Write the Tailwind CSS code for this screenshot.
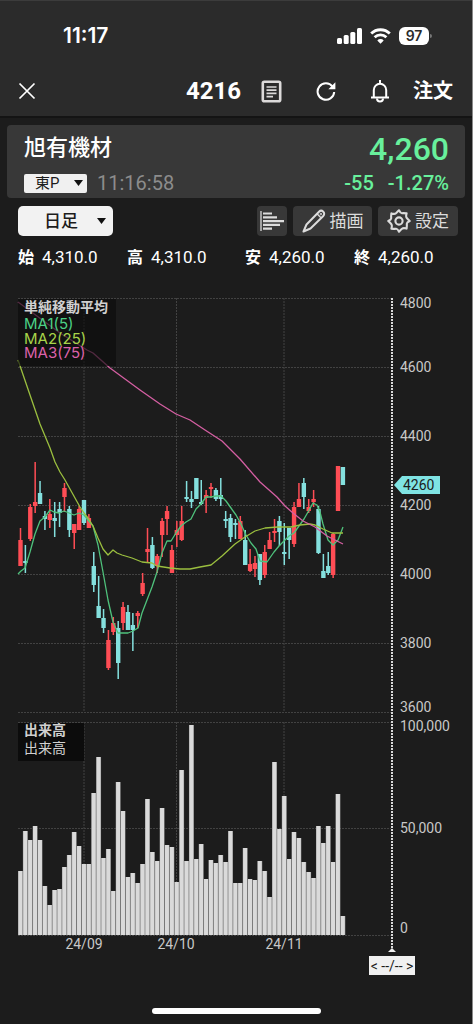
<!DOCTYPE html>
<html lang="ja">
<head>
<meta charset="utf-8">
<meta name="viewport" content="width=device-width, initial-scale=1">
<title>4216 旭有機材</title>
<script src="https://cdn.jsdelivr.net/npm/@tailwindcss/browser@4"></script>
</head>
<body class="bg-[#1c1c1c]">
<div class="flex min-h-screen flex-col border-r border-[#8a8a8a] bg-[#1c1c1c] font-['Roboto','Noto_Sans_CJK_JP',sans-serif] text-white">

  <header class="border-b-2 border-[#141414] bg-[#2b2b2b]">
    <div class="flex h-[70px] items-center justify-between border-t border-[#3c3c3c] pl-[63px] pr-10">
      <span class="font-['Inter',sans-serif] text-[21px] font-semibold">11:17</span>
      <div class="flex items-center gap-2">
        <svg class="h-4 w-[25px]" viewBox="0 0 25 16" fill="#fff" aria-label="signal"><rect x="0" y="10" width="5" height="6" rx="1.5"/><rect x="6.7" y="7" width="5" height="9" rx="1.5"/><rect x="13.3" y="4" width="5" height="12" rx="1.5"/><rect x="20" y="0" width="5" height="16" rx="1.5"/></svg>
        <svg class="h-4 w-[21px]" viewBox="0 0 21 16" fill="none" stroke="#fff" stroke-width="2.8" aria-label="wifi"><path d="M1.2 5.6a13.2 13.2 0 0 1 18.6 0"/><path d="M4.6 9.3a8.4 8.4 0 0 1 11.8 0"/><path d="M10.5 15.8 7.3 12.4a4.5 4.5 0 0 1 6.4 0Z" fill="#fff" stroke="none"/></svg>
        <div class="flex items-center gap-px">
          <span class="flex h-[18px] w-[30px] items-center justify-center rounded-md bg-white font-['Inter',sans-serif] text-sm font-semibold text-[#2b2b2b]">97</span>
          <span class="h-1 w-0.5 rounded-r bg-[#777]"></span>
        </div>
      </div>
    </div>
    <div class="flex h-[46px] items-center pl-[18px] pr-[19px] pb-1">
      <button aria-label="閉じる"><svg class="size-[18px]" viewBox="0 0 18 18" stroke="#fff" stroke-width="1.7"><path d="M1.5 1.5l15 15M16.5 1.5l-15 15"/></svg></button>
      <h1 class="ml-auto text-2xl font-bold">4216</h1>
      <button class="ml-5" aria-label="メモ"><svg class="h-[23px] w-[21px]" viewBox="0 0 21 23" fill="none" stroke="#dcdada" stroke-width="2.6"><rect x="1.8" y="1.8" width="17.4" height="19.4" rx="1.5"/><path d="M5.5 7h10M5.5 10.2h10M5.5 13.4h10M5.5 16.6h6.5" stroke-width="1.7"/></svg></button>
      <button class="ml-[34px]" aria-label="更新"><svg class="size-5" viewBox="0 0 20 20" fill="none" stroke="#fff" stroke-width="2"><path d="M16.6 5.6A8.3 8.3 0 1 0 18.2 11"/><path d="M19.4 1.2v7h-7Z" fill="#fff" stroke="none"/></svg></button>
      <button class="ml-[34px]" aria-label="通知"><svg class="h-[23px] w-5" viewBox="0 0 20 23" fill="none" stroke="#fff" stroke-width="2"><path d="M1 17.5h18M3.8 17.5V10a6.2 6.2 0 0 1 12.4 0v7.5M10 0v4"/><path d="M7 18.5a3 3 0 0 0 6 0"/></svg></button>
      <button class="ml-[23px] text-xl font-bold">注文</button>
    </div>
  </header>

  <section class="mx-[7px] mt-[7px] flex h-[73px] justify-between rounded bg-[#383838] pr-4 pl-[17px]">
    <div>
      <h2 class="mt-[7px] text-[22px] leading-8 font-medium">旭有機材</h2>
      <div class="mt-[7px] flex h-6 items-center gap-2.5">
        <div class="relative flex">
          <select aria-label="市場" class="h-[19px] w-[63px] appearance-none rounded-xs bg-[#f0f0f0] pl-[11px] text-[15px] leading-none text-[#1c1c1c]"><option>東P</option></select>
          <svg class="pointer-events-none absolute top-1.5 right-1 h-[6px] w-[9px]" viewBox="0 0 9 6" fill="#111"><path d="M0 0h9L4.5 6Z"/></svg>
        </div>
        <time class="text-xl text-[#8c8c8c]">11:16:58</time>
      </div>
    </div>
    <div class="text-right font-medium text-[#68f09c]">
      <div class="mt-1.5 text-[32px] leading-9">4,260</div>
      <div class="mt-1 flex h-6 items-center justify-end gap-3.5 text-xl"><span>-55</span><span>-1.27%</span></div>
    </div>
  </section>

  <div class="mt-2 flex h-[30px] gap-1.5 pr-3.5 pl-[18px]">
    <div class="relative mr-auto flex">
      <select aria-label="足種" class="h-[30px] w-[95px] appearance-none rounded-[5px] bg-[#f2f2f2] pl-[26px] text-[17px] leading-none font-medium text-[#1c1c1c]"><option>日足</option></select>
      <svg class="pointer-events-none absolute top-3 right-[7px] h-[6px] w-[9px]" viewBox="0 0 9 6" fill="#111"><path d="M0 0h9L4.5 6Z"/></svg>
    </div>
    <button class="flex w-[30px] items-center justify-center rounded bg-[#383838]" aria-label="価格帯別出来高"><svg class="h-5 w-6" viewBox="0 0 24 20" fill="none" stroke="#dcdcdc" stroke-width="2.2"><path d="M1 0v20" stroke-width="1.3"/><path d="M3 2.5h9M3 6.3h14M3 10.1h21M3 13.9h17M3 17.7h9"/></svg></button>
    <button class="flex w-[79px] items-center justify-center gap-1 rounded bg-[#383838] text-[17px] text-[#dcdcdc]"><svg class="size-6" viewBox="0 0 24 24" fill="none" stroke="#dcdcdc" stroke-width="2" stroke-linejoin="round"><path d="M1.5 22.5 4.5 15.5 17 2.7a3 3 0 0 1 4.3 4.3L8.5 19.5Z"/><path d="m15 4.8 4.2 4.2" stroke-width="1.3"/><circle cx="18.9" cy="5.1" r=".8" stroke-width="1"/></svg><span class="pt-0.5">描画</span></button>
    <button class="flex w-20 items-center justify-center gap-1 rounded bg-[#383838] text-[17px] text-[#dcdcdc]"><svg class="size-6" viewBox="0 0 24 24" fill="none" stroke="#dcdcdc" stroke-width="2.1" stroke-linejoin="round"><path d="M12 1.3Q13.5 4.4 15 4.2T19.6 4.4Q18.6 7.6 19.8 9T22.7 12Q19.6 13.5 19.8 15T19.6 19.6Q16.4 18.6 15 19.8T12 22.7Q10.500 19.6 9 19.8T4.4 19.6Q5.400 16.4 4.2 15T1.3 12Q4.4 10.500 4.2 9T4.4 4.4Q7.600 5.400 9 4.2T12 1.3Z"/><circle cx="12" cy="12" r="3.6"/></svg><span class="pt-0.5">設定</span></button>
  </div>

  <dl class="mt-2 grid h-7 grid-cols-[109fr_118fr_109fr_104fr] items-center pr-3.5 pl-[18px] text-[17px]">
    <div class="flex items-center gap-2"><dt class="text-base font-bold">始</dt><dd>4,310.0</dd></div>
    <div class="flex items-center gap-2"><dt class="text-base font-bold">高</dt><dd>4,310.0</dd></div>
    <div class="flex items-center gap-2"><dt class="text-base font-bold">安</dt><dd>4,260.0</dd></div>
    <div class="flex items-center gap-2"><dt class="text-base font-bold">終</dt><dd>4,260.0</dd></div>
  </dl>

  <main class="mt-[18px]">
    <svg id="chart" class="block w-full" viewBox="0 290 472 662" role="img" aria-label="日足チャート">
      <g stroke="#424242" stroke-width="1" stroke-dasharray="2 1" fill="none">
        <path d="M18 298.5H391M18 367.5H391M18 436.5H391M18 505.5H391M18 574.5H391M18 643.5H391M18 712.5H391M18 722.5H391M18 828.5H391M18 935.5H391"/>
        <path d="M84 298V712M176.5 298V712M284 298V712M84 722V935M176.5 722V935M284 722V935"/>
      </g>
      <g id="volume"></g>
      <g id="candles"></g>
      <g fill="none" stroke-width="1.3" stroke-linejoin="round">
        <polyline stroke="#4fc27c" points="18,574 21,571 25,568 30,552 35,534 40,521 45,517 50,510 54,512 59,513 64,511 69,513 74,515 79,513 84,515 88,520 93,526 98,545 103,572 108,600 113,622 118,633 124,633 128,633 133,631 138,628 142,613 147,600 152,587 157,572 162,553 167,541 171,541 176,533 181,526 186,522 191,519 196,509 201,504 206,497 211,497 216,496 221,496 226,501 231,508 236,515 241,524 246,535 251,543 256,549 260,561 267,562 274,552 279,546 284,541 289,536 294,533 299,526 304,519 308,512 313,503 317,505 320,512 323,524 328,540 333,545 338,540 343,527"/>
        <polyline stroke="#9bbf3f" points="18,360 30,395 40,424 50,448 55,462 60,472 65,480 70,489 75,498 80,507 84,513 88,518 93,526 98,538 103,549 108,555 113,550 117,553 122,555 132,558 142,562 152,563 157,566 170,568 180,569 190,569 200,567 211,565 222,556 235,544 245,537 255,531 265,528 278,527 291,527 300,525 310,524 315,525 323,529 332,533 343,533"/>
        <polyline stroke="#d45fa2" points="18,302 60,333 87,350 93,353 110,368 140,390 160,404 176,414 190,420 205,430 222,441 240,459 260,482 277,497 285,506 293,513 303,521 315,527 327,536 343,544"/>
      </g>
      <rect x="18" y="299" width="98" height="67" fill="#0c0c0c" fill-opacity=".65"/>
      <g font-family="Inter, sans-serif" font-size="15">
        <text x="24" y="312" font-family="Noto Sans CJK JP, sans-serif" font-size="14" font-weight="700" fill="#d0d0d0">単純移動平均</text>
        <text x="24" y="329" fill="#4cd086">MA1(5)</text>
        <text x="24" y="344" fill="#a8d44a">MA2(25)</text>
        <text x="24" y="358" fill="#dc62aa">MA3(75)</text>
      </g>
      <rect x="18" y="723" width="66" height="38" fill="#0c0c0c"/>
      <g font-family="Noto Sans CJK JP, sans-serif" font-size="14" fill="#d0d0d0">
        <text x="24" y="735" font-weight="700">出来高</text>
        <text x="24" y="753">出来高</text>
      </g>
      <path d="M392 298V952" stroke="#d8d8d8" stroke-width="2" stroke-dasharray="2 1"/>
      <path d="M388 952l4-4 4 4Z" fill="#f0f0f0"/>
      <g font-family="Roboto, sans-serif" font-size="14" fill="#c8c8c8">
        <text x="400" y="308">4800</text>
        <text x="400" y="372">4600</text>
        <text x="400" y="441">4400</text>
        <text x="400" y="510">4200</text>
        <text x="400" y="579">4000</text>
        <text x="400" y="648">3800</text>
        <text x="400" y="712">3600</text>
        <text x="400" y="731">100,000</text>
        <text x="400" y="833">50,000</text>
        <text x="400" y="933">0</text>
        <g text-anchor="middle"><text x="84" y="949">24/09</text><text x="176" y="949">24/10</text><text x="284" y="949">24/11</text></g>
        <path d="M394 485l8-9h38v18h-38Z" fill="#7fe3e3"/>
        <text x="403" y="490" fill="#1c1c1c">4260</text>
      </g>
    </svg>
    <div class="flex justify-end pr-[57px] pt-1">
      <button class="flex h-[19px] w-[46px] items-center justify-center bg-[#f0f0f0] text-sm whitespace-nowrap text-[#1c1c1c]">&lt; --/-- &gt;</button>
    </div>
  </main>
  <div class="mx-auto mt-auto mb-[10px] h-[6px] w-[169px] rounded-full bg-white"></div>
</div>
<script>
  // Each candle: direction (1 = up, 0 = down), wick top, wick bottom, body top, body bottom
  const candles = [
    [1,528,566,540,566],[0,545,573,561,563],[1,504,541,507,539],[1,462,513,502,506],[0,481,504,493,504],
    [0,511,530,516,519],[1,499,528,514,520],[0,502,537,518,521],[0,502,527,509,513],[1,483,512,488,497],
    [0,506,537,509,530],[1,524,549,524,533],[1,506,530,509,530],[0,500,525,500,523],[1,514,528,518,528],
    [0,552,592,566,585],[0,576,618,606,618],[0,609,633,618,628],[1,630,670,640,668],[1,617,635,623,632],
    [0,621,679,628,663],[1,602,630,607,623],[0,605,630,612,630],[0,613,651,625,630],[1,611,628,613,616],
    [1,573,596,583,594],[1,528,562,549,552],[0,537,569,545,568],[1,554,573,556,566],[1,518,557,521,535],
    [1,506,535,511,519],[1,545,573,550,573],[1,521,547,530,535],[1,506,541,521,540],[0,481,502,497,499],
    [0,491,508,499,502],[0,478,499,478,499],[0,480,505,502,504],[1,490,513,495,498],[1,483,498,487,489],
    [0,488,501,490,499],[0,478,506,495,499],[0,511,528,519,521],[0,514,542,518,537],[0,519,539,523,525],
    [1,516,539,521,539],[0,530,565,540,565],[1,549,572,564,571],[1,556,577,563,569],[0,554,585,554,580],
    [1,545,578,552,575],[1,532,549,540,549],[1,519,542,531,533],[0,516,546,521,532],[0,523,565,552,554],
    [0,528,559,528,540],[1,502,547,507,544],[1,483,507,499,507],[0,478,509,483,497],[1,499,513,507,511],
    [1,490,507,499,502],[0,506,554,509,553],[0,554,578,571,578],[0,552,575,566,573],[1,533,578,534,575],
    [1,466,511,466,511],[0,467,485,467,485]
  ];
  // Top edge of each volume bar; all bars stand on y = 935
  const volume = [871,831,840,826,840,886,905,890,889,867,855,832,846,864,864,793,757,858,849,891,782,811,877,873,883,864,799,852,861,808,845,847,882,770,861,725,859,844,879,860,863,855,862,831,883,883,848,879,880,861,871,897,762,829,796,859,832,838,862,872,878,826,843,826,862,794,916];
  const step = 4.885;
  const rect = (x, y, w, h, fill) => `<rect x="${x.toFixed(2)}" y="${y}" width="${w}" height="${h}" fill="${fill}"/>`;
  document.getElementById('volume').innerHTML = volume.map((y, i) =>
    rect(18 + step * i, y, step, 935 - y, '#8c8c8c') + rect(18.4 + step * i, y, 4, 935 - y, '#dadada')).join('');
  document.getElementById('candles').innerHTML = candles.map(([up, high, low, top, bottom], i) => {
    const x = 20.5 + step * i, fill = up ? '#ff4d55' : '#84e0de';
    return rect(x - 0.75, high, 1.5, low - high, fill) + rect(x - 2.2, top, 4.4, bottom - top, fill);
  }).join('');
</script>
</body>
</html>
